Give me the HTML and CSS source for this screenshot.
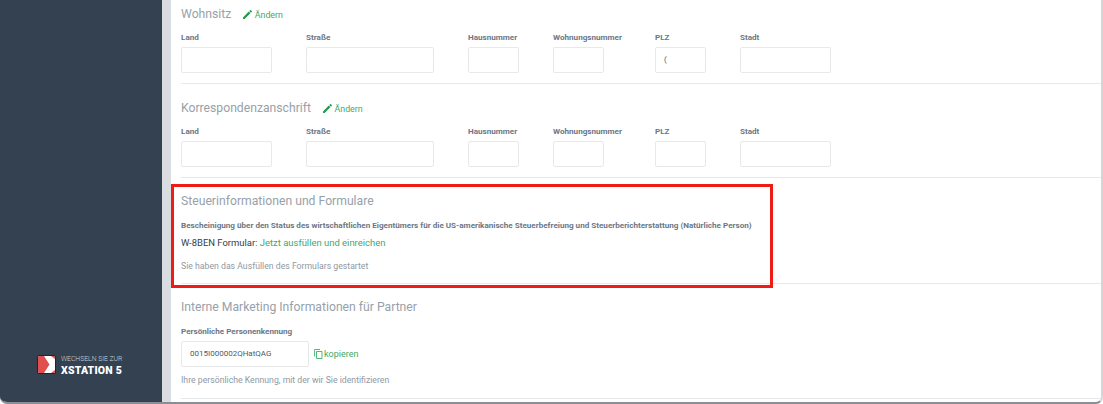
FILE: index.html
```html
<!DOCTYPE html>
<html lang="de">
<head>
<meta charset="utf-8">
<title>Konto</title>
<link rel="stylesheet" href="styles.css">
</head>
<body>
<div class="window">
  <aside class="sidebar">
    <a class="switch">
      <svg class="switch-logo" width="19" height="19" viewBox="0 0 19 19">
        <rect width="19" height="19" rx="2.5" fill="#1c2530"/>
        <rect x="1" y="1" width="17" height="17" rx="1.5" fill="#fff"/>
        <path d="M1 2.5a1.5 1.5 0 0 1 1.5-1.5H7L12.5 9.5L7 18H2.5A1.5 1.5 0 0 1 1 16.5Z" fill="#e04f4b"/>
        <path d="M13 1H18V6.5L15.8 4.6Z" fill="#e04f4b" opacity=".0"/>
        <path d="M14 1H16.5A1.5 1.5 0 0 1 18 2.5V4Z" fill="#e04f4b"/>
        <path d="M14 18H16.5A1.5 1.5 0 0 0 18 16.5V15Z" fill="#e04f4b"/>
      </svg>
      <span class="switch-text">
        <span class="switch-small">WECHSELN SIE ZUR</span>
        <span class="switch-big">XSTATION 5</span>
      </span>
    </a>
  </aside>
  <div class="gutter"></div>
  <main class="main">
    <section class="section section-first">
      <div class="head">
        <h2 class="title">Wohnsitz</h2>
        <a class="edit"><svg class="pencil" width="9" height="9" viewBox="0 0 10 10"><path d="M0 10V8.2L6.4 1.8L8.2 3.6L1.8 10ZM7 1.2L7.9.3a.7.7 0 0 1 1 0L9.7 1.1a.7.7 0 0 1 0 1L8.8 3Z" fill="#1f9d4d"/></svg>Ändern</a>
      </div>
      <div class="fields">
        <div class="field f-land"><label class="label">Land</label><div class="input"></div></div>
        <div class="field f-street"><label class="label">Straße</label><div class="input"></div></div>
        <div class="field f-num"><label class="label">Hausnummer</label><div class="input"></div></div>
        <div class="field f-wohn"><label class="label">Wohnungsnummer</label><div class="input"></div></div>
        <div class="field f-num"><label class="label">PLZ</label><div class="input">(</div></div>
        <div class="field f-land"><label class="label">Stadt</label><div class="input"></div></div>
      </div>
    </section>
    <section class="section">
      <div class="head">
        <h2 class="title">Korrespondenzanschrift</h2>
        <a class="edit"><svg class="pencil" width="9" height="9" viewBox="0 0 10 10"><path d="M0 10V8.2L6.4 1.8L8.2 3.6L1.8 10ZM7 1.2L7.9.3a.7.7 0 0 1 1 0L9.7 1.1a.7.7 0 0 1 0 1L8.8 3Z" fill="#1f9d4d"/></svg>Ändern</a>
      </div>
      <div class="fields">
        <div class="field f-land"><label class="label">Land</label><div class="input"></div></div>
        <div class="field f-street"><label class="label">Straße</label><div class="input"></div></div>
        <div class="field f-num"><label class="label">Hausnummer</label><div class="input"></div></div>
        <div class="field f-wohn"><label class="label">Wohnungsnummer</label><div class="input"></div></div>
        <div class="field f-num"><label class="label">PLZ</label><div class="input"></div></div>
        <div class="field f-land"><label class="label">Stadt</label><div class="input"></div></div>
      </div>
    </section>
    <section class="section section-tax">
      <h2 class="title">Steuerinformationen und Formulare</h2>
      <p class="label tax-desc">Bescheinigung über den Status des wirtschaftlichen Eigentümers für die US-amerikanische Steuerbefreiung und Steuerberichterstattung (Natürliche Person)</p>
      <p class="form-line">W-8BEN Formular: <a class="link">Jetzt ausfüllen und einreichen</a></p>
      <p class="hint hint-tax">Sie haben das Ausfüllen des Formulars gestartet</p>
    </section>
    <section class="section section-partner">
      <h2 class="title">Interne Marketing Informationen für Partner</h2>
      <label class="label partner-label">Persönliche Personenkennung</label>
      <div class="copy-row">
        <div class="input input-id">0015I000002QHatQAG</div>
        <a class="copy"><svg class="copy-icon" width="9" height="10" viewBox="0 0 9 10" fill="none" stroke="#3fae6a" stroke-width=".9"><path d="M2.5 2.5H8V9.5H2.5Z"/><path d="M.6 7.5V.5H6"/></svg>kopieren</a>
      </div>
      <p class="hint hint-partner">Ihre persönliche Kennung, mit der wir Sie identifizieren</p>
    </section>
    <div class="highlight"></div>
  </main>
</div>
</body>
</html>
```
FILE: styles.css
```css
* { box-sizing: border-box; }
html, body { margin: 0; padding: 0; height: 100%; overflow: hidden; background: #fff; }
body { font-family: Roboto, "Liberation Sans", sans-serif; color: #6f7c89; }

.window {
  display: flex;
  width: 1103px;
  height: 404px;
  border-bottom: 2px solid #8b8f93;
  border-right: 2px solid #d3d5d8;
  border-bottom-right-radius: 7px;
  border-bottom-left-radius: 7px;
  overflow: hidden;
}

.sidebar {
  width: 162px;
  flex: none;
  background: #334150;
  display: flex;
  flex-direction: column;
  justify-content: flex-end;
  padding: 0 0 24.5px 37px;
}
.gutter { width: 8.5px; flex: none; background: #d9dde2; }

.switch { display: flex; align-items: center; gap: 5px; }
.switch-logo { flex: none; }
.switch-text { display: flex; flex-direction: column; padding-top: 3px; }
.switch-small { font-size: 6.8px; line-height: 9px; font-weight: 300; color: #d0d5da; white-space: nowrap; }
.switch-big { font-size: 10.5px; line-height: 14px; font-weight: 900; color: #fff; white-space: nowrap; letter-spacing: .2px; }

.main { flex: 1; position: relative; min-width: 0; padding-left: 10.5px; }

.section { border-bottom: 1px solid #e6e8eb; height: 94px; padding-top: 16px; }
.section-first { height: 84px; padding-top: 6px; }
.section-tax { height: 106px; padding-top: 15px; }
.section-partner { height: 115px; padding-top: 15px; }

.head { display: flex; align-items: center; gap: 11.5px; height: 17px; }
.title { margin: 0; font-size: 12.2px; line-height: 17px; font-weight: 400; color: #98a1aa; white-space: nowrap; }

.edit { display: flex; align-items: center; gap: 3px; font-size: 8.8px; color: #3fa869; }
.pencil { flex: none; }

.fields { display: flex; gap: 34px; margin-top: 9px; }
.field { flex: none; }
.f-land { width: 91px; }
.f-street { width: 128px; }
.f-num { width: 51px; }
.f-wohn { width: 68px; }

.label { display: block; font-size: 8.1px; line-height: 11px; font-weight: 700; color: #6b7785; white-space: nowrap; }

.input {
  width: 100%;
  height: 26px;
  margin-top: 4px;
  background: #fff;
  border: 1px solid #e6e8ea;
  border-radius: 2px;
  font-size: 8px;
  line-height: 24px;
  color: #4f5a66;
  padding-left: 8px;
}
.f-wohn .input { width: 51px; }

.tax-desc { margin: 10px 0 0; }
.form-line { margin: 6px 0 0; font-size: 9.45px; line-height: 12px; color: #333d47; white-space: nowrap; }
.link { color: #3fa869; }
.hint { margin: 0; font-size: 8.7px; line-height: 11px; color: #8f99a3; white-space: nowrap; }
.hint-tax { margin-top: 12px; }

.partner-label { margin-top: 10px; }
.copy-row { display: flex; align-items: center; gap: 5px; margin-top: 4px; }
.input-id { width: 128px; margin-top: 0; }
.copy { display: flex; align-items: center; gap: 1px; font-size: 9px; color: #3fa869; }
.hint-partner { margin-top: 8px; }

.highlight {
  position: absolute;
  left: .5px;
  top: 184px;
  width: 602px;
  height: 104px;
  border: 3px solid #ee1c14;
  pointer-events: none;
}
```
